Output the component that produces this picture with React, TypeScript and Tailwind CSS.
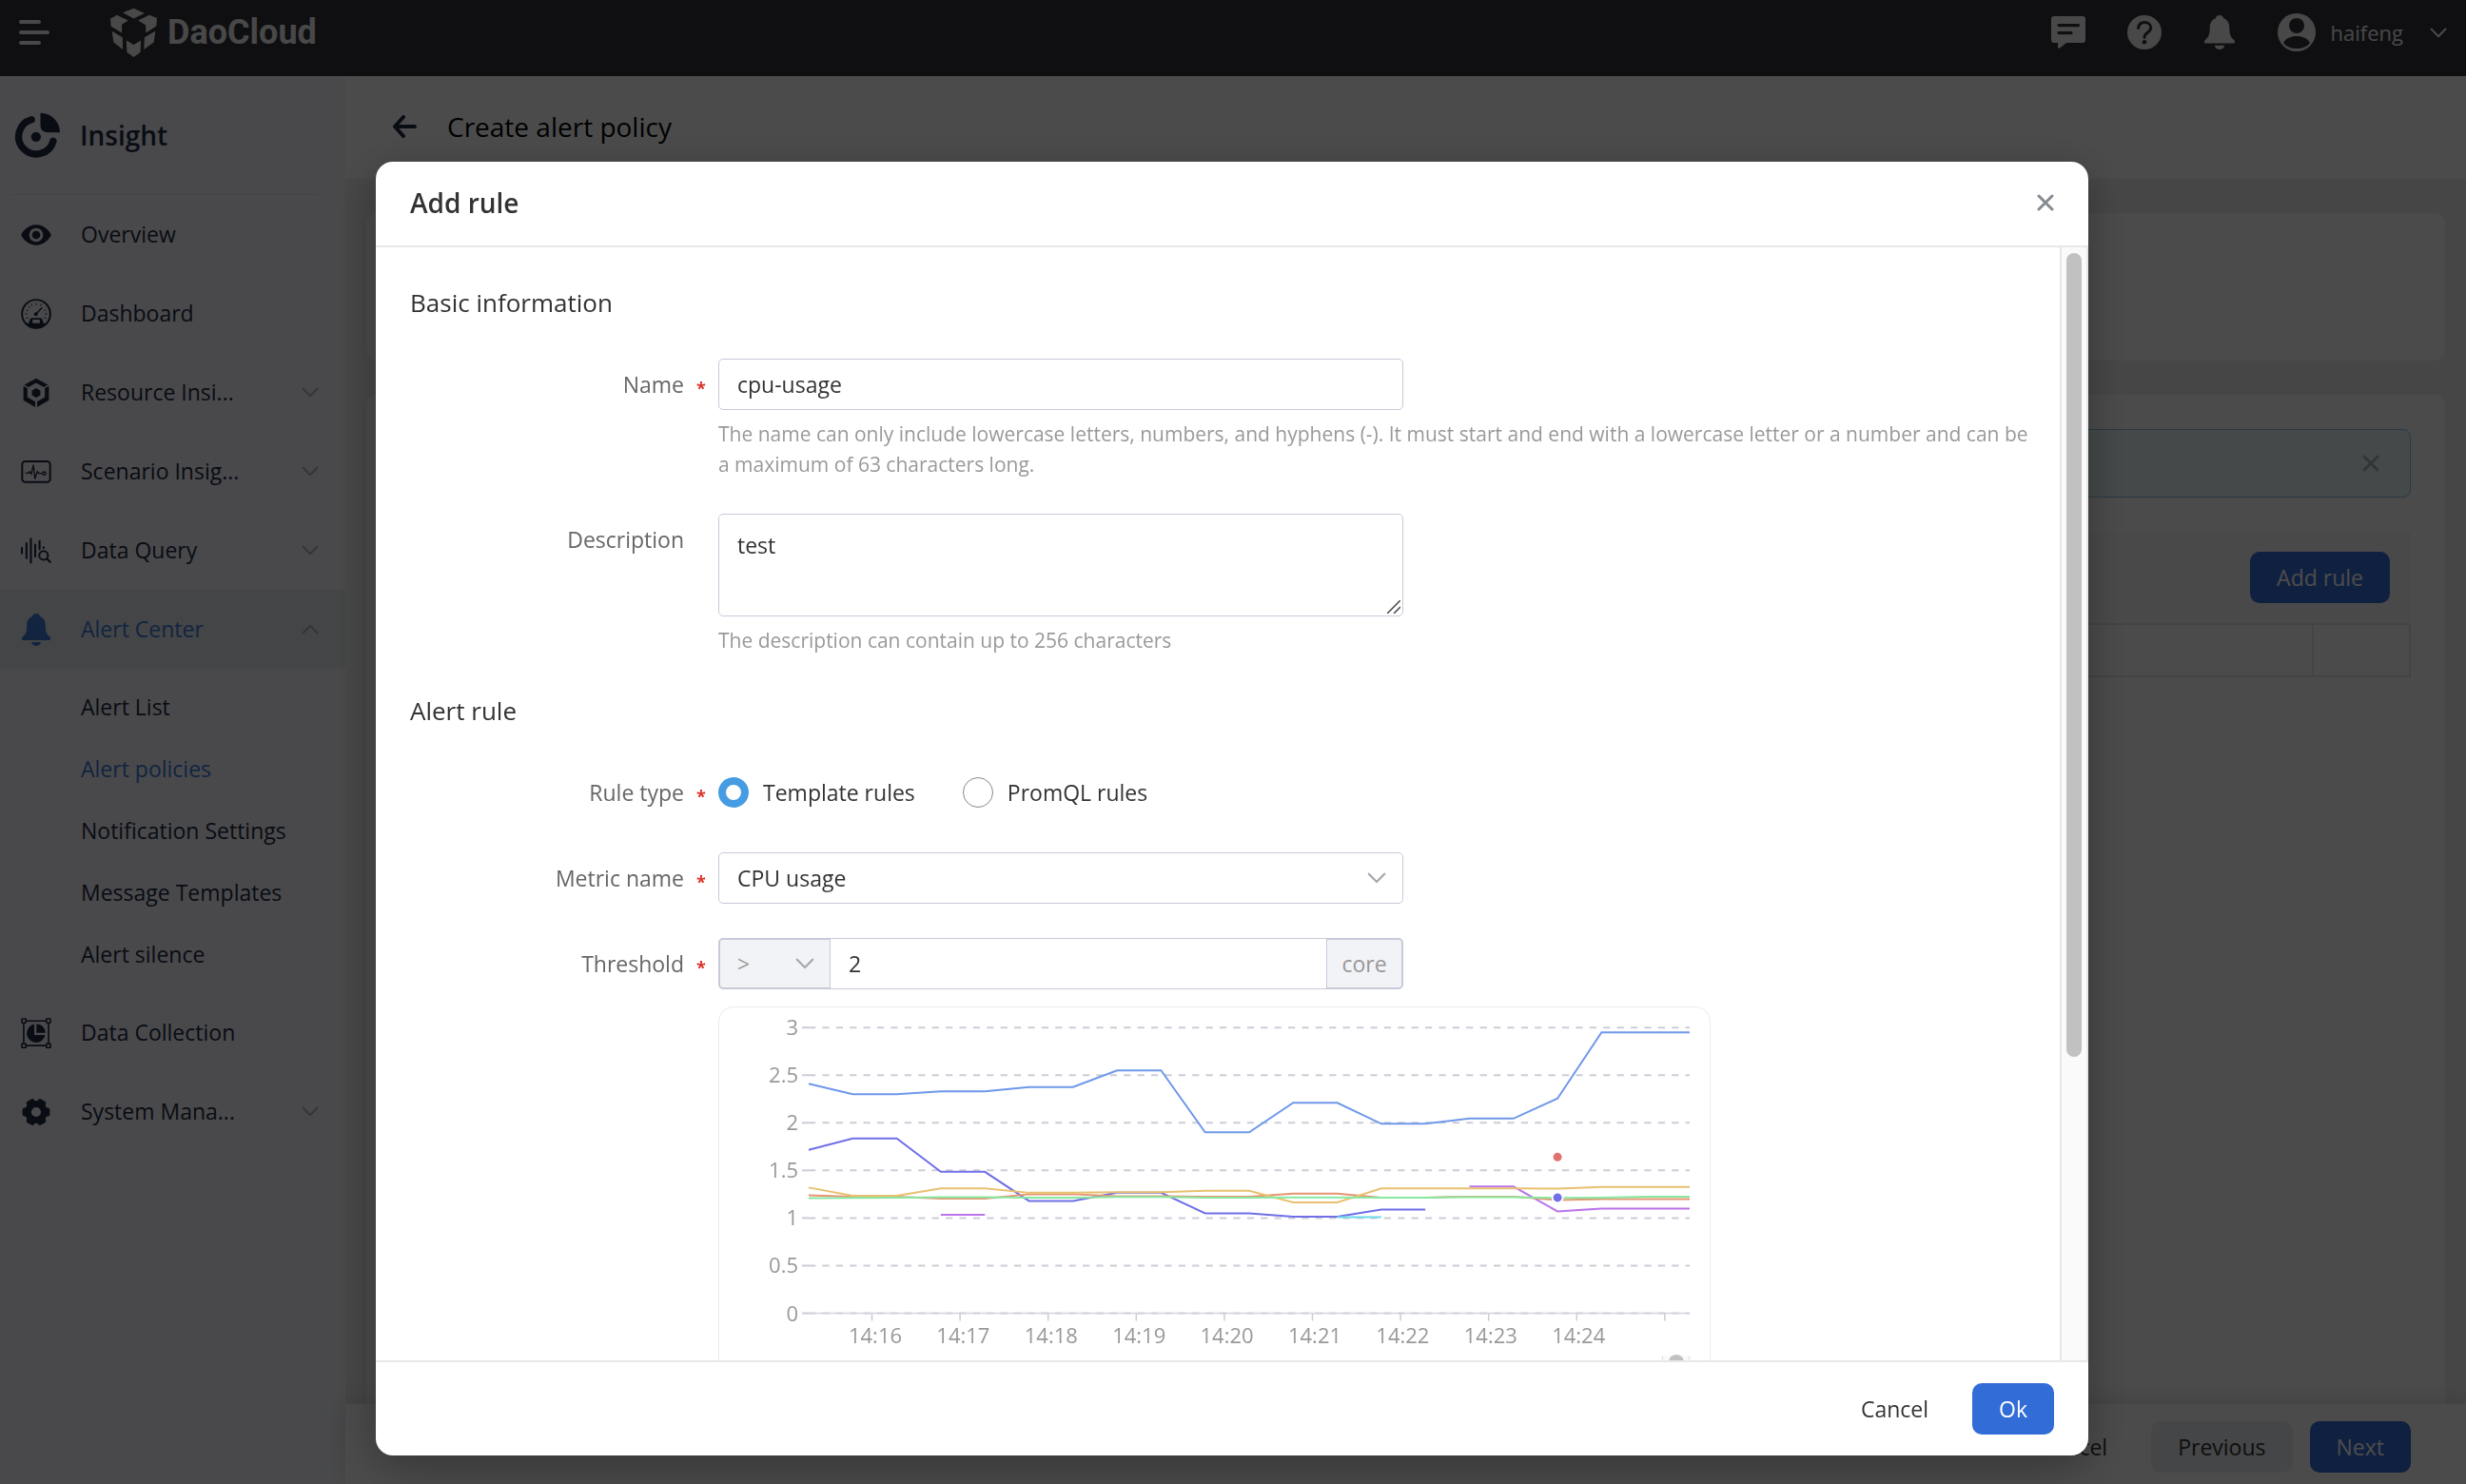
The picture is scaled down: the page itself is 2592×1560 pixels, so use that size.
import { useState } from 'react';

interface IconProps {
  className?: string;
}

interface NavItem {
  label: string;
  icon: React.FC<IconProps>;
  expandable?: boolean;
}

interface Series {
  color: string;
  start: number;
  values: number[];
}

interface FieldRowProps {
  label: string;
  htmlFor?: string;
  required?: boolean;
  children: React.ReactNode;
}

/* ---------- Icons ---------- */

const ChevronIcon: React.FC<IconProps> = ({ className }) => (
  <svg viewBox="0 0 18 11" fill="none" stroke="currentColor" strokeWidth="2" strokeLinecap="round" strokeLinejoin="round" className={className}>
    <path d="M1.5 1.5L9 9.2l7.5-7.7" />
  </svg>
);

const CloseIcon: React.FC<IconProps> = ({ className }) => (
  <svg viewBox="0 0 18 18" fill="none" stroke="currentColor" strokeWidth="3" strokeLinecap="round" className={className}>
    <path d="M2 2l14 14M16 2L2 16" />
  </svg>
);

const BellIcon: React.FC<IconProps> = ({ className }) => (
  <svg viewBox="0 0 32 36" fill="currentColor" className={className}>
    <path d="M16 1c-2.200 0-3.700 1.300-4.100 3C7.800 5.700 6.200 9.300 6.200 13.500c0 5.500-.6 8.700-3.800 11.400C1 26 .6 27.200 1 28.200c.2.600.8.800 1.500.8h27c.7 0 1.300-.2 1.500-.8.4-1 0-2.200-1.400-3.300-3.200-2.700-3.800-5.900-3.800-11.400 0-4.200-1.600-7.800-5.700-9.500C19.700 2.300 18.200 1 16 1z" />
    <path d="M11 31h10c-.6 2.600-2.600 4-5 4s-4.400-1.400-5-4z" />
  </svg>
);

const DaoLogo: React.FC<IconProps> = ({ className }) => (
  <svg viewBox="345 25 152 158" fill="currentColor" className={className}>
    <path d="M421 27l34 16-34 16-34-18z" />
    <path d="M348 60l20-12 36 17-20 13v26l-34-20z" />
    <path d="M435 65l35-17 24 10-2 25-33 21V80z" />
    <path d="M353 99l33 19 1 38-29-22z" />
    <path d="M489 99l-5 35-31 22 2-38z" />
    <path d="M398 128l23 13 23-13-2 37-21 15-21-15z" />
  </svg>
);

const InsightLogo: React.FC<IconProps> = ({ className }) => (
  <svg viewBox="44 356 146 146" className={className}>
    <path d="M98 379A55 55 0 1 0 166 446" fill="none" stroke="currentColor" strokeWidth="22" strokeLinecap="round" />
    <path d="M126 358a61 61 0 0 1 61 61h-40q-21 0-21-21z" fill="currentColor" />
    <circle cx="112" cy="433" r="15.500" fill="currentColor" />
  </svg>
);

const EyeIcon: React.FC<IconProps> = ({ className }) => (
  <svg viewBox="0 0 96 96" className={className}>
    <path
      fill="currentColor"
      fillRule="evenodd"
      d="M48 16C72 16 88 34 94 44q2 4 0 8C88 62 72 80 48 80S8 62 2 52q-2-4 0-8C8 34 24 16 48 16zm0 10a22 22 0 1 0 0 44 22 22 0 0 0 0-44zm0 9a13 13 0 1 1 0 26 13 13 0 0 1 0-26z"
    />
  </svg>
);

const GaugeIcon: React.FC<IconProps> = ({ className }) => (
  <svg viewBox="65 280 98 98" className={className}>
    <circle cx="114" cy="329" r="45.500" fill="none" stroke="currentColor" strokeWidth="6" />
    <path d="M78 359h13q2-16 8-17h30q6 1 8 17h13q-14 17-36 17t-36-17z" fill="currentColor" />
    <rect x="102" y="347" width="24" height="12" rx="3" className="fill-[#f3f5fa]" />
    <path d="M114 329l18-19" stroke="currentColor" strokeWidth="5" strokeLinecap="round" />
    <circle cx="113" cy="330" r="6" fill="currentColor" />
    <path d="M79 329h7M142 329h7M114 294v7M89 304l5 5M98 297l3 6M131 297l-3 6M82 316l6 2M140 318l6-2M82 343l6-2M140 341l6 2" stroke="currentColor" strokeWidth="3" />
  </svg>
);

const HexagonIcon: React.FC<IconProps> = ({ className }) => (
  <svg viewBox="65 530 98 98" fill="currentColor" className={className}>
    <path d="M114 532l38 21-13 8-25-14-25 14-13-8z" />
    <path d="M73 557l13 7v29l25 14v18l-38-22z" />
    <path d="M155 557l-13 7v29l-25 14v18l38-22z" />
    <path d="M114 564l13.500 7.500v15L114 594l-13.500-7.500v-15z" />
  </svg>
);

const PulseIcon: React.FC<IconProps> = ({ className }) => (
  <svg viewBox="65 299 98 98" fill="none" stroke="currentColor" strokeLinejoin="round" className={className}>
    <rect x="69" y="314" width="90" height="67" rx="10" strokeWidth="6" />
    <path d="M79 352h9l5-5 5 9 7-30 5 44 8-24 4 7h11" strokeWidth="4" />
    <circle cx="140" cy="353" r="5" strokeWidth="4" />
  </svg>
);

const QueryIcon: React.FC<IconProps> = ({ className }) => (
  <svg viewBox="65 548 98 98" fill="none" stroke="currentColor" strokeLinecap="round" className={className}>
    <path d="M68 588v17M83 573v48M97 558v77M111 577v38M125 566v26M138 586v2" strokeWidth="6.500" />
    <circle cx="138" cy="612" r="14" strokeWidth="6" />
    <path d="M149 623l10 10" strokeWidth="7" />
  </svg>
);

const CollectionIcon: React.FC<IconProps> = ({ className }) => (
  <svg viewBox="65 808 98 98" className={className}>
    <g fill="none" stroke="currentColor" strokeWidth="5">
      <path d="M82 818h64M82 897h64M74 826v63M154 826v63" />
      <rect x="68" y="811" width="13" height="13" rx="2" />
      <rect x="147" y="811" width="13" height="13" rx="2" />
      <rect x="68" y="891" width="13" height="13" rx="2" />
      <rect x="147" y="891" width="13" height="13" rx="2" />
    </g>
    <path d="M108 828v35h35a30 30 0 1 1-35-35z" fill="currentColor" />
    <path d="M115 827a30 30 0 0 1 29 29h-29z" fill="currentColor" />
  </svg>
);

const GearIcon: React.FC<IconProps> = ({ className }) => (
  <svg viewBox="-49 -49 98 98" className={className}>
    <circle r="26" fill="none" stroke="currentColor" strokeWidth="21" />
    <g fill="currentColor">
      <rect x="26" y="-14" width="18" height="28" rx="7" />
      <rect x="26" y="-14" width="18" height="28" rx="7" transform="rotate(60)" />
      <rect x="26" y="-14" width="18" height="28" rx="7" transform="rotate(120)" />
      <rect x="26" y="-14" width="18" height="28" rx="7" transform="rotate(180)" />
      <rect x="26" y="-14" width="18" height="28" rx="7" transform="rotate(240)" />
      <rect x="26" y="-14" width="18" height="28" rx="7" transform="rotate(300)" />
    </g>
  </svg>
);

/* ---------- Data ---------- */

const mainNav: NavItem[] = [
  { label: 'Overview', icon: EyeIcon },
  { label: 'Dashboard', icon: GaugeIcon },
  { label: 'Resource Insi...', icon: HexagonIcon, expandable: true },
  { label: 'Scenario Insig...', icon: PulseIcon, expandable: true },
  { label: 'Data Query', icon: QueryIcon, expandable: true },
];

const alertNav = ['Alert List', 'Alert policies', 'Notification Settings', 'Message Templates', 'Alert silence'];

const bottomNav: NavItem[] = [
  { label: 'Data Collection', icon: CollectionIcon },
  { label: 'System Mana...', icon: GearIcon, expandable: true },
];

const series: Series[] = [
  { color: '#6f98ea', start: 0, values: [2.41, 2.3, 2.3, 2.33, 2.33, 2.375, 2.375, 2.55, 2.55, 1.9, 1.9, 2.21, 2.21, 1.99, 1.99, 2.045, 2.045, 2.255, 2.95, 2.95, 2.95] },
  { color: '#bb74ea', start: 3, values: [1.035, 1.035] },
  { color: '#bb74ea', start: 15, values: [1.33, 1.33, 1.07, 1.1, 1.1, 1.1] },
  { color: '#706fe8', start: 0, values: [1.715, 1.835, 1.835, 1.485, 1.485, 1.18, 1.18, 1.265, 1.265, 1.05, 1.05, 1.015, 1.015, 1.09, 1.09] },
  { color: '#6fd8ea', start: 12, values: [1.01, 1.01] },
  { color: '#e89470', start: 0, values: [1.24, 1.225, 1.225, 1.205, 1.205, 1.25, 1.25, 1.23, 1.23, 1.225, 1.225, 1.255, 1.255, 1.215, 1.215, 1.225, 1.225, 1.19, 1.2, 1.2, 1.2] },
  { color: '#e8c170', start: 0, values: [1.32, 1.235, 1.235, 1.31, 1.31, 1.265, 1.265, 1.27, 1.27, 1.285, 1.285, 1.165, 1.165, 1.31, 1.31, 1.31, 1.31, 1.308, 1.325, 1.325, 1.325] },
  { color: '#88e8a0', start: 0, values: [1.21, 1.212, 1.214, 1.22, 1.22, 1.215, 1.215, 1.222, 1.222, 1.213, 1.213, 1.216, 1.216, 1.215, 1.215, 1.22, 1.22, 1.212, 1.215, 1.225, 1.225] },
];

const yTicks = [3, 2.5, 2, 1.5, 1, 0.5, 0];
const xTicks = ['14:16', '14:17', '14:18', '14:19', '14:20', '14:21', '14:22', '14:23', '14:24', ''];

const toX = (index: number) => 94 + index * 46.3;
const toY = (value: number) => 321.5 - value * 100.1;

/* ---------- Page behind the dialog ---------- */

const TopBar = () => (
  <header className="flex h-20 shrink-0 items-center bg-[#32353b] px-5 pb-3 text-[#f0f0f0]">
    <button type="button" aria-label="Toggle menu">
      <svg viewBox="0 0 32 26" fill="none" stroke="currentColor" strokeWidth="4" strokeLinecap="round" className="h-[26px] w-8">
        <path d="M2 2h19M2 13h28M2 24h19" />
      </svg>
    </button>
    <a href="#home" className="ml-[63px] flex items-center gap-[10px]">
      <DaoLogo className="h-[53px] w-[51px]" />
      <span className="font-[Roboto,sans-serif] text-[36px] leading-10 font-bold">DaoCloud</span>
    </a>
    <div className="ml-auto flex items-center gap-11">
      <button type="button" aria-label="Messages">
        <svg viewBox="0 0 36 34" className="h-[34px] w-9">
          <path fill="currentColor" fillRule="evenodd" d="M3 0h30a3 3 0 0 1 3 3v22a3 3 0 0 1-3 3H16l-7 5.500c-1 .6-2 0-2-1V28H3a3 3 0 0 1-3-3V3a3 3 0 0 1 3-3zm5 8a1.600 1.600 0 0 0 0 3.200h20.500a1.600 1.600 0 0 0 0-3.200zm0 8a1.600 1.600 0 0 0 0 3.200h13a1.600 1.600 0 0 0 0-3.200z" />
        </svg>
      </button>
      <button type="button" aria-label="Help">
        <svg viewBox="0 0 36 36" className="size-9">
          <circle cx="18" cy="18" r="18" fill="currentColor" />
          <path d="M11.500 13.500c.5-4 3.300-6 6.700-6 3.700 0 6.500 2.300 6.500 5.500 0 2.600-1.500 4-3.400 5.300-2 1.400-3.300 2.400-3.300 5" fill="none" stroke="#32353b" strokeWidth="3" strokeLinecap="round" />
          <circle cx="18" cy="28.300" r="2.300" fill="#32353b" />
        </svg>
      </button>
      <button type="button" aria-label="Notifications">
        <BellIcon className="h-[38px] w-[34px]" />
      </button>
      <button type="button" className="flex items-center gap-4 text-[22px]">
        <svg viewBox="0 0 40 40" className="size-10">
          <circle cx="20" cy="20" r="20" fill="currentColor" />
          <circle cx="20" cy="13" r="8" fill="#32353b" />
          <path d="M6 31c3-5 8-7 14-7s11 2 14 7c-3 4-8 6-14 6s-11-2-14-6z" fill="#32353b" />
        </svg>
        <span>haifeng</span>
        <ChevronIcon className="ml-3 h-[11px] w-[18px]" />
      </button>
    </div>
  </header>
);

const NavLink: React.FC<NavItem> = ({ label, icon: Icon, expandable }) => (
  <li>
    <a href="#nav" className="flex h-[83px] items-center gap-[31px] pr-7 pl-[22px]">
      <Icon className="size-8" />
      <span className="flex-1">{label}</span>
      {expandable && <ChevronIcon className="h-[11px] w-[18px] text-[#b0b3ba]" />}
    </a>
  </li>
);

const Sidebar = () => (
  <aside className="w-[363px] shrink-0 bg-[#f3f5fa] text-[#222b45]">
    <div className="mr-7 ml-3 flex h-[125px] items-center gap-5 border-b border-[#e0e3e8]">
      <InsightLogo className="ml-[3px] size-[49px]" />
      <span className="text-[28px] font-semibold">Insight</span>
    </div>
    <nav>
      <ul>
        {mainNav.map((item) => (
          <NavLink key={item.label} {...item} />
        ))}
        <li>
          <a href="#alert-center" className="flex h-[83px] items-center gap-[31px] bg-[#e5e8ec] pr-7 pl-[22px] text-[#3c78d8]">
            <BellIcon className="h-9 w-8" />
            <span className="flex-1">Alert Center</span>
            <ChevronIcon className="h-[11px] w-[18px] rotate-180 text-[#b0b3ba]" />
          </a>
          <ul className="py-2">
            {alertNav.map((label) => (
              <li key={label}>
                <a
                  href="#alert"
                  className={`flex h-[65px] items-center pl-[85px] ${label === 'Alert policies' ? 'text-[#3c78d8]' : ''}`}
                >
                  {label}
                </a>
              </li>
            ))}
          </ul>
        </li>
        {bottomNav.map((item) => (
          <NavLink key={item.label} {...item} />
        ))}
      </ul>
    </nav>
  </aside>
);

const PolicyPage = () => (
  <main className="flex min-w-0 flex-1 flex-col bg-[#ececec]">
    <div className="flex h-[108px] shrink-0 items-center gap-8 bg-[#fbfbfb] pb-[2px] pl-[49px]">
      <button type="button" aria-label="Back" className="text-[#222b45]">
        <svg viewBox="0 0 26 24" fill="none" stroke="currentColor" strokeWidth="4" strokeLinecap="round" strokeLinejoin="round" className="h-6 w-[26px]">
          <path d="M12 2L3 12l9 10M3 12h21" />
        </svg>
      </button>
      <h1 className="text-[28px] font-medium text-black">Create alert policy</h1>
    </div>

    <div className="flex flex-1 flex-col gap-9 px-[22px] pt-9">
      <section className="h-[155px] rounded-xl bg-[#fbfbfb]" />
      <section className="flex-1 rounded-t-xl bg-[#fbfbfb] px-9 pt-9">
        <div className="flex h-[72px] items-center justify-end rounded-lg border border-[#86bff0] bg-[#e9f3f5] pr-8">
          <button type="button" aria-label="Dismiss" className="text-[#a9adb3]">
            <CloseIcon className="size-[18px]" />
          </button>
        </div>
        <div className="mt-9 flex h-[96px] items-center justify-end bg-[#f6f6f6] pr-[22px]">
          <button type="button" className="h-[54px] rounded-[10px] bg-[#326cd6] px-7 text-white">
            Add rule
          </button>
        </div>
        <table className="w-full border-collapse">
          <tbody>
            <tr className="h-[55px]">
              <td className="border-2 border-[#e4e4e6]" />
              <td className="w-[102px] border-2 border-[#e4e4e6]" />
            </tr>
          </tbody>
        </table>
      </section>
    </div>

    <footer className="flex h-[84px] shrink-0 items-center justify-end gap-[18px] bg-[#fbfbfb] pt-[6px] pr-[58px] shadow-[0_-4px_24px_rgba(0,0,0,0.12)]">
      <button type="button" className="h-[54px] rounded-[10px] px-7 text-[#333]">Cancel</button>
      <button type="button" className="h-[54px] rounded-[10px] bg-[#e6e9ee] px-7 text-[#333]">Previous</button>
      <button type="button" className="h-[54px] rounded-[10px] bg-[#326cd6] px-7 text-white">Next</button>
    </footer>
  </main>
);

/* ---------- Dialog ---------- */

const FieldRow: React.FC<FieldRowProps> = ({ label, htmlFor, required, children }) => (
  <div className="mb-9 flex">
    <div className="flex h-[54px] w-[324px] shrink-0 items-center justify-end text-[#666]">
      <label htmlFor={htmlFor}>{label}</label>
      <span className="w-9 pt-2 text-center text-[18px] font-bold text-[#d93026]">{required ? '*' : ''}</span>
    </div>
    <div className="min-w-0 flex-1">{children}</div>
  </div>
);

const UsageChart = () => (
  <svg viewBox="0 0 1041 460" className="w-full" role="img" aria-label="CPU usage">
    {yTicks.map((tick) => (
      <g key={tick}>
        <path d={`M87 ${toY(tick)}h7`} stroke="#cbcdd8" strokeWidth="2" />
        <path d={`M94 ${toY(tick)}H1020`} stroke="#cbcdd8" strokeWidth="2" strokeDasharray="7.200 7.200" />
        <text x="83" y={toY(tick) + 8} textAnchor="end" className="fill-[#999] text-[22px]">
          {tick}
        </text>
      </g>
    ))}

    <path d={`M94 ${toY(0)}H1020`} stroke="#d3d4de" strokeWidth="1.500" />
    {xTicks.map((tick, i) => (
      <g key={i}>
        <path d={`M${160.5 + i * 92.6} ${toY(0)}v8`} stroke="#cbcdd8" strokeWidth="1.500" />
        <text x={164 + i * 92.4} y="353" textAnchor="middle" className="fill-[#999] text-[22px]">
          {tick}
        </text>
      </g>
    ))}

    {series.map((line, i) => (
      <polyline
        key={i}
        points={line.values.map((v, n) => `${toX(line.start + n)},${toY(v)}`).join(' ')}
        fill="none"
        stroke={line.color}
        strokeWidth="2"
      />
    ))}

    {/* Single samples */}
    <circle cx={toX(17)} cy={toY(1.64)} r="4.500" fill="#e07370" />
    <circle cx={toX(17)} cy={toY(1.215)} r="5.500" fill="#706fe8" stroke="#fff" strokeWidth="2" />

    {/* Legend scroll bar */}
    <rect x="991" y="366" width="29" height="90" fill="#fafafa" />
    <path d="M991.500 366v90M1019.500 366v90" stroke="#e8e8e8" strokeWidth="1.500" />
    <rect x="998" y="365" width="16" height="80" rx="8" fill="#c1c1c1" />
  </svg>
);

const AddRuleDialog = () => {
  const [name, setName] = useState('cpu-usage');
  const [description, setDescription] = useState('test');
  const [ruleType, setRuleType] = useState('template');
  const [threshold, setThreshold] = useState('2');

  return (
    <div
      role="dialog"
      aria-labelledby="dialog-title"
      className="flex w-full max-w-[1800px] flex-col overflow-hidden rounded-[18px] bg-white text-[#333] shadow-[0_12px_48px_rgba(0,0,0,0.3)]"
    >
      <div className="flex h-[90px] shrink-0 items-center justify-between border-b-2 border-[#e8e8ea] px-9 pb-[2px]">
        <h2 id="dialog-title" className="text-[28px] font-semibold">Add rule</h2>
        <button type="button" aria-label="Close" className="text-[#868a91]">
          <CloseIcon className="size-[18px]" />
        </button>
      </div>

      <div className="flex min-h-0 flex-1">
        <form className="min-w-0 flex-1 overflow-hidden pt-10 pr-8 pl-9">
          <h3 className="mb-[41px] text-[26px] leading-9">Basic information</h3>

          <FieldRow label="Name" htmlFor="name" required>
            <input
              id="name"
              value={name}
              onChange={(e) => setName(e.target.value)}
              className="block h-[54px] w-[720px] rounded-[5px] border border-[#c8cad9] px-[19px] outline-none"
            />
            <p className="mt-[9px] text-[21px] leading-8 text-[#999]">
              The name can only include lowercase letters, numbers, and hyphens (-). It must start and end with a lowercase letter or a number and can be a maximum of 63 characters long.
            </p>
          </FieldRow>

          <FieldRow label="Description" htmlFor="description">
            <div className="relative w-[720px]">
              <textarea
                id="description"
                value={description}
                onChange={(e) => setDescription(e.target.value)}
                className="block h-[108px] w-full resize-none rounded-[5px] border border-[#c8cad9] px-[19px] py-[14px] leading-9 outline-none"
              />
              <svg viewBox="0 0 14 14" stroke="#444" strokeWidth="1.500" className="absolute right-[3px] bottom-[3px] size-[14px]">
                <path d="M0 14L14 0M7 14l7-7" />
              </svg>
            </div>
            <p className="mt-[9px] text-[21px] leading-8 text-[#999]">The description can contain up to 256 characters</p>
          </FieldRow>

          <h3 className="mt-10 mb-[41px] text-[26px] leading-9">Alert rule</h3>

          <FieldRow label="Rule type" required>
            <div className="flex h-[54px] items-center gap-[50px]">
              <label className="flex items-center gap-[15px]">
                <input
                  type="radio"
                  name="rule-type"
                  checked={ruleType === 'template'}
                  onChange={() => setRuleType('template')}
                  className="size-8 appearance-none rounded-full border border-[#868a91] checked:border-8 checked:border-[#469ce3]"
                />
                Template rules
              </label>
              <label className="flex items-center gap-[15px]">
                <input
                  type="radio"
                  name="rule-type"
                  checked={ruleType === 'promql'}
                  onChange={() => setRuleType('promql')}
                  className="size-8 appearance-none rounded-full border border-[#868a91] checked:border-8 checked:border-[#469ce3]"
                />
                PromQL rules
              </label>
            </div>
          </FieldRow>

          <FieldRow label="Metric name" htmlFor="metric" required>
            <div className="relative w-[720px]">
              <select id="metric" className="block h-[54px] w-full appearance-none rounded-[5px] border border-[#c8cad9] bg-white px-[19px] outline-none">
                <option>CPU usage</option>
              </select>
              <ChevronIcon className="pointer-events-none absolute top-[21px] right-[18px] h-3 w-5 text-[#a4a8ae]" />
            </div>
          </FieldRow>

          <FieldRow label="Threshold" htmlFor="threshold" required>
            <div className="flex h-[54px] w-[720px]">
              <div className="relative">
                <select
                  aria-label="Operator"
                  disabled
                  className="block h-[54px] w-[118px] appearance-none rounded-l-[5px] border-2 border-r border-[#c8cad9] bg-[#f1f3f6] px-[18px] text-[#999] opacity-100"
                >
                  <option>&gt;</option>
                </select>
                <ChevronIcon className="pointer-events-none absolute top-[21px] right-[17px] h-3 w-5 text-[#a4a8ae]" />
              </div>
              <input
                id="threshold"
                value={threshold}
                onChange={(e) => setThreshold(e.target.value)}
                className="min-w-0 flex-1 border-y border-[#c8cad9] px-[19px] outline-none"
              />
              <span className="flex w-[81px] items-center justify-center rounded-r-[5px] border-2 border-l border-[#c8cad9] bg-[#f1f3f6] text-[#999]">
                core
              </span>
            </div>
            <div className="mt-[18px] max-w-[1043px] rounded-[16px] border border-[#ebebf0]">
              <UsageChart />
            </div>
          </FieldRow>
        </form>

        {/* Scroll bar */}
        <div className="w-[30px] shrink-0 border-x-2 border-[#e8e8e8] bg-[#fafafa] px-[5px] py-[6px]">
          <div className="h-[73%] rounded-full bg-[#c1c1c1]" />
        </div>
      </div>

      <div className="flex h-[100px] shrink-0 items-center justify-end gap-[18px] border-t-2 border-[#e8e8ea] px-9">
        <button type="button" className="h-[54px] rounded-[10px] px-7">Cancel</button>
        <button type="button" className="h-[54px] rounded-[10px] bg-[#326cd6] px-7 text-white">Ok</button>
      </div>
    </div>
  );
};

export default function App() {
  return (
    <div className="relative flex h-screen flex-col overflow-hidden font-['Open_Sans',sans-serif] text-[23px]">
      <TopBar />
      <div className="flex min-h-0 flex-1">
        <Sidebar />
        <PolicyPage />
      </div>

      {/* Dialog layer */}
      <div className="fixed inset-0 flex justify-center bg-black/70 pt-[170px] pr-[34px] pb-[30px] pl-8">
        <AddRuleDialog />
      </div>
    </div>
  );
}
